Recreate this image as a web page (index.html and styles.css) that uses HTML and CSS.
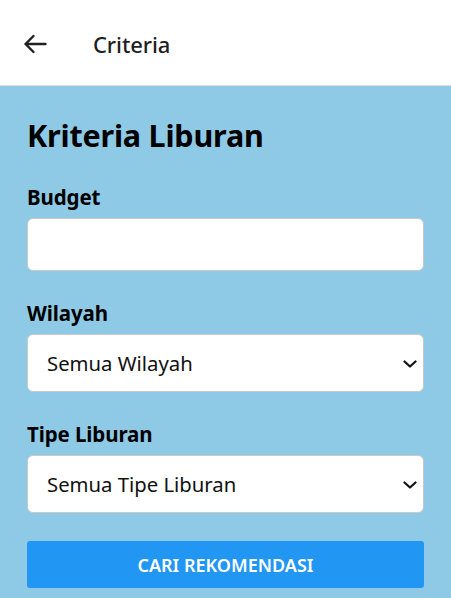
FILE: index.html
```html
<!DOCTYPE html>
<html lang="id">
<head>
<meta charset="utf-8">
<title>Criteria</title>
<link rel="stylesheet" href="styles.css">
</head>
<body>
<header class="topbar">
  <svg class="back" width="24" height="20" viewBox="0 0 24 20" aria-hidden="true">
    <path d="M22.5 10H2.5M10.5 2L2.5 10L10.5 18" fill="none" stroke="#222" stroke-width="2.4" stroke-linecap="round" stroke-linejoin="round"/>
  </svg>
  <span class="topbar-title">Criteria</span>
</header>
<main class="panel">
  <h1 class="title">Kriteria Liburan</h1>
  <form class="form">
    <div class="field">
      <label class="label" for="budget">Budget</label>
      <input class="input" id="budget" type="text">
    </div>
    <div class="field">
      <label class="label" for="wilayah">Wilayah</label>
      <div class="select-wrap">
        <select class="select" id="wilayah"><option>Semua Wilayah</option></select>
        <svg class="chev" width="14" height="8" viewBox="0 0 14 8" aria-hidden="true"><path d="M1.5 1.5L7 6.5L12.5 1.5" fill="none" stroke="#111" stroke-width="2.2" stroke-linecap="round" stroke-linejoin="round"/></svg>
      </div>
    </div>
    <div class="field">
      <label class="label" for="tipe">Tipe Liburan</label>
      <div class="select-wrap">
        <select class="select" id="tipe"><option>Semua Tipe Liburan</option></select>
        <svg class="chev" width="14" height="8" viewBox="0 0 14 8" aria-hidden="true"><path d="M1.5 1.5L7 6.5L12.5 1.5" fill="none" stroke="#111" stroke-width="2.2" stroke-linecap="round" stroke-linejoin="round"/></svg>
      </div>
    </div>
    <button class="btn" type="button">CARI REKOMENDASI</button>
  </form>
</main>
</body>
</html>
```
FILE: styles.css
```css
html, body {
  margin: 0;
  padding: 0;
  height: 100%;
}
body {
  font-family: "Noto Sans", "Open Sans", sans-serif;
  background: #8ecae6;
  display: flex;
  flex-direction: column;
}
.topbar {
  height: 86px;
  background: #fff;
  border-bottom: 1px solid #d6dde2;
  display: flex;
  align-items: center;
  padding: 2px 0 0 23px;
  box-sizing: border-box;
  flex: none;
}
.back {
  display: block;
}
.topbar-title {
  margin-left: 46px;
  font-size: 22px;
  font-weight: 500;
  color: #1f1f1f;
  letter-spacing: -0.1px;
}
.panel {
  flex: 1;
  padding: 31px 27px 0 27px;
}
.title {
  margin: 0 0 30px 0;
  font-size: 30.5px;
  font-weight: 700;
  color: #000;
  line-height: 37px;
  letter-spacing: -0.2px;
}
.form {
  display: flex;
  flex-direction: column;
}
.field {
  display: flex;
  flex-direction: column;
  margin-bottom: 29px;
}
.label {
  font-size: 20.5px;
  font-weight: 700;
  color: #000;
  line-height: 26px;
  margin-bottom: 8px;
  letter-spacing: -0.1px;
}
.input, .select {
  box-sizing: border-box;
  width: 100%;
  background: #fff;
  border: 1px solid #c9c9c9;
  border-radius: 6px;
  font-family: inherit;
  color: #111;
  outline: none;
}
.input {
  height: 53px;
}
.select-wrap {
  position: relative;
}
.select {
  -webkit-appearance: none;
  appearance: none;
  height: 58px;
  padding: 0 40px 0 19px;
  font-size: 20.3px;
  display: block;
}
.chev {
  position: absolute;
  right: 7px;
  top: 26px;
  pointer-events: none;
}
.btn {
  margin-top: -1px;
  height: 47px;
  border: none;
  border-radius: 3px;
  background: #2196f3;
  color: #fff;
  font-family: inherit;
  font-size: 18px;
  font-weight: 600;
  letter-spacing: 0;
}
```
